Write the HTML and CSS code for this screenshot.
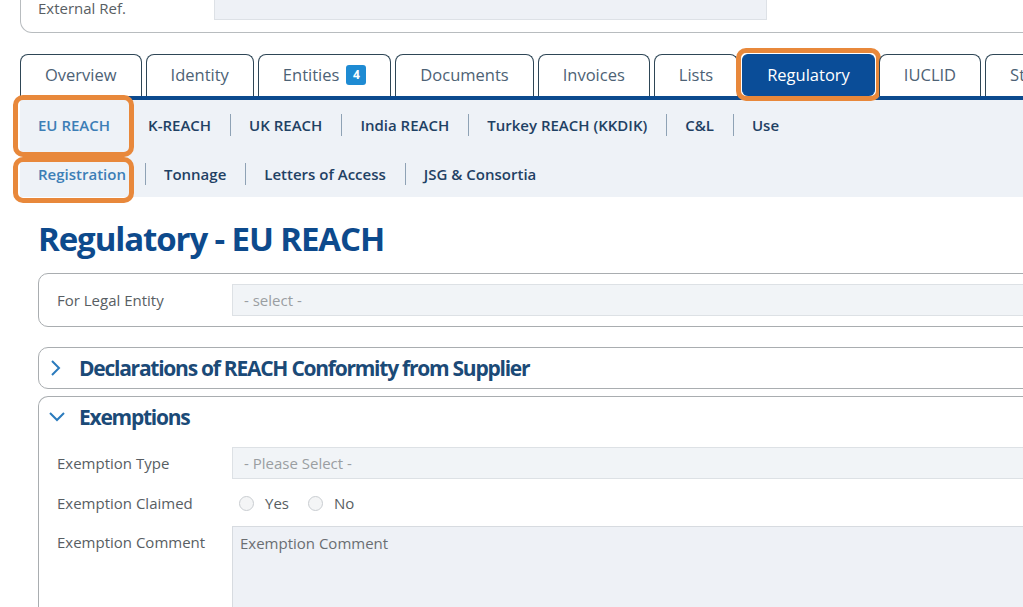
FILE: index.html
```html
<!DOCTYPE html>
<html>
<head>
<meta charset="utf-8">
<link rel="stylesheet" href="styles.css">
</head>
<body>
<div class="page">
  <div class="top-card">
    <div class="top-row">
      <div class="top-label">External Ref.</div>
      <div class="top-input"></div>
    </div>
  </div>

  <div class="tabs">
    <div class="tab">Overview</div>
    <div class="tab">Identity</div>
    <div class="tab">Entities <span class="badge">4</span></div>
    <div class="tab">Documents</div>
    <div class="tab">Invoices</div>
    <div class="tab">Lists</div>
    <div class="tab tab-active mark mark-tab">Regulatory</div>
    <div class="tab">IUCLID</div>
    <div class="tab">Structure</div>
  </div>

  <div class="subnav">
    <div class="subrow">
      <div class="subitem sub-active mark mark-eu">EU REACH</div>
      <div class="subitem sub-nosep">K-REACH</div>
      <div class="subitem">UK REACH</div>
      <div class="subitem">India REACH</div>
      <div class="subitem">Turkey REACH (KKDIK)</div>
      <div class="subitem">C&amp;L</div>
      <div class="subitem">Use</div>
    </div>
    <div class="subrow subrow2">
      <div class="subitem sub-active mark mark-reg">Registration</div>
      <div class="subitem">Tonnage</div>
      <div class="subitem">Letters of Access</div>
      <div class="subitem">JSG &amp; Consortia</div>
    </div>
  </div>

  <div class="content">
    <h1 class="title">Regulatory - EU REACH</h1>

    <div class="card card-entity">
      <div class="field">
        <div class="field-label">For Legal Entity</div>
        <div class="select">- select -</div>
      </div>
    </div>

    <div class="card card-collapsed">
      <div class="card-head">
        <svg class="chev-right" width="12" height="20" viewBox="0 0 12 20"><path d="M2 3 L9 10 L2 17" fill="none" stroke="#2b7bbd" stroke-width="2"/></svg>
        <span class="card-title">Declarations of REACH Conformity from Supplier</span>
      </div>
    </div>

    <div class="card card-open">
      <div class="card-head">
        <svg class="chev-down" width="18" height="12" viewBox="0 0 18 12"><path d="M2 2 L9 9 L16 2" fill="none" stroke="#2b7bbd" stroke-width="2"/></svg>
        <span class="card-title">Exemptions</span>
      </div>
      <div class="field field-type">
        <div class="field-label">Exemption Type</div>
        <div class="select">- Please Select -</div>
      </div>
      <div class="field field-claimed">
        <div class="field-label">Exemption Claimed</div>
        <div class="radios">
          <span class="radio"></span><span class="radio-text">Yes</span>
          <span class="radio"></span><span class="radio-text">No</span>
        </div>
      </div>
      <div class="field field-comment">
        <div class="field-label label-top">Exemption Comment</div>
        <div class="textarea">Exemption Comment</div>
      </div>
    </div>
  </div>
</div>
</body>
</html>
```

FILE: styles.css
```css
html, body {
  margin: 0;
  padding: 0;
  background: #ffffff;
  overflow: hidden;
}
body {
  font-family: "Open Sans", "Noto Sans", sans-serif;
  color: #4a4a4a;
}
.page {
  margin-top: -16px;
  padding-left: 20px;
  width: 1200px;
}

/* top card */
.top-card {
  border: 1px solid #b8bcbf;
  border-top: none;
  border-radius: 0 0 12px 12px;
  padding: 0 0 12px 17px;
}
.top-row {
  display: flex;
  align-items: flex-start;
}
.top-label {
  width: 176px;
  padding-top: 14px;
  font-size: 15px;
  line-height: 20px;
  color: #585e63;
}
.top-input {
  width: 551px;
  height: 35px;
  background: #eef1f6;
  border: 1px solid #dde1e6;
  border-top: none;
}

/* tabs */
.tabs {
  margin-top: 20px;
  display: flex;
  align-items: flex-end;
  gap: 4px;
  border-bottom: 4px solid #0c4a8e;
  height: 43px;
}
.tab {
  position: relative;
  height: 42px;
  box-sizing: border-box;
  display: flex;
  align-items: center;
  padding: 0 24px 2px;
  border: 1px solid #2e4656;
  border-bottom: none;
  border-radius: 8px 8px 0 0;
  background: #fff;
  font-size: 16.5px;
  color: #4d6275;
  white-space: nowrap;
}
.tab-active {
  background: #0a4d98;
  border-color: #0a4d98;
  color: #ffffff;
  border-radius: 6px;
}
.badge {
  display: inline-flex;
  align-items: center;
  justify-content: center;
  width: 20px;
  height: 20px;
  margin-left: 7px;
  border-radius: 3px;
  background: #1e8bd3;
  color: #fff;
  font-size: 12px;
  font-weight: 700;
}

/* annotation boxes */
.mark::after {
  content: "";
  position: absolute;
  border: 5px solid #e8883b;
  border-radius: 10px;
  pointer-events: none;
}
.mark-tab::after {
  left: -7px; right: -7px; top: -7px; bottom: -5px;
}
.mark-eu::after {
  left: -7px; right: -5px; top: -5px; bottom: -7px;
}
.mark-reg::after {
  left: -7px; right: 11px; top: 7px; bottom: -6px;
}

/* sub navigation */
.subnav {
  background: #eef2f7;
}
.subrow {
  display: flex;
  align-items: center;
  height: 50px;
}
.subrow2 {
  height: 47px;
}
.subitem {
  position: relative;
  height: 100%;
  display: flex;
  align-items: center;
  padding: 0 19px;
  font-size: 15px;
  font-weight: 600;
  color: #1f4164;
  white-space: nowrap;
}
.subitem:first-child {
  padding-left: 18px;
}
.subitem + .subitem::before {
  content: "";
  position: absolute;
  left: 0;
  top: 50%;
  height: 22px;
  margin-top: -11px;
  border-left: 1px solid #8ea2b5;
}
.sub-nosep::before {
  display: none;
}
.sub-active {
  color: #3c7eb6;
}

/* content */
.content {
  padding-left: 18px;
}
.title {
  margin: 20px 0 12px;
  font-size: 33px;
  line-height: 44px;
  font-weight: 700;
  color: #0d4a8c;
  letter-spacing: -1.1px;
}
.card {
  border: 1px solid #a9adb0;
  border-radius: 10px;
  width: 1100px;
}
.card-entity {
  padding: 10px 18px;
}
.card-collapsed {
  margin-top: 20px;
}
.card-open {
  margin-top: 7px;
  border-bottom: none;
  border-radius: 10px 10px 0 0;
  padding-bottom: 20px;
}
.card-head {
  display: flex;
  align-items: center;
  height: 40px;
  padding-left: 9px;
}
.chev-right {
  margin: 0 17px 0 2px;
}
.chev-down {
  margin: 0 13px 0 0;
}
.card-title {
  font-size: 21px;
  font-weight: 700;
  color: #1b4a77;
  letter-spacing: -1.25px;
}
.field {
  display: flex;
  align-items: center;
}
.card-open .field {
  padding-left: 18px;
}
.field-label {
  width: 175px;
  flex: none;
  font-size: 15px;
  color: #585e63;
}
.select {
  flex: 1;
  height: 30px;
  display: flex;
  align-items: center;
  padding-left: 11px;
  background: #f1f4f7;
  border: 1px solid #dde1e5;
  font-size: 15px;
  color: #9a9ea2;
}
.field-type {
  margin-top: 10px;
}
.field-claimed {
  margin-top: 8px;
  height: 32px;
}
.radios {
  display: flex;
  align-items: center;
  padding-left: 7px;
}
.radio {
  width: 13px;
  height: 13px;
  border-radius: 50%;
  border: 1px solid #c9cdd1;
  background: #f4f5f6;
}
.radio-text {
  margin: 0 19px 0 11px;
  font-size: 15px;
  color: #585e63;
}
.field-comment {
  margin-top: 7px;
  align-items: flex-start;
}
.label-top {
  padding-top: 6px;
  line-height: 20px;
}
.textarea {
  flex: 1;
  height: 100px;
  padding: 6px 7px;
  line-height: 20px;
  background: #eef1f6;
  border: 1px solid #d7dbe0;
  font-size: 15px;
  color: #6a6e72;
}
```
